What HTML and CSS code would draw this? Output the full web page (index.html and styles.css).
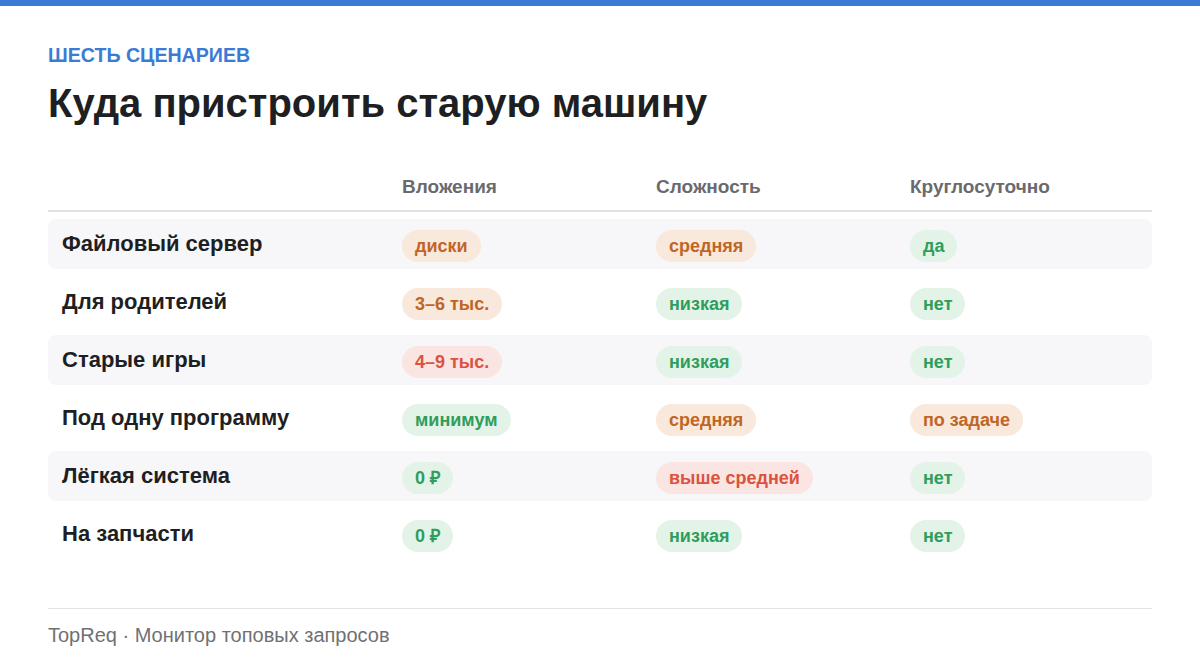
FILE: index.html
```html
<!DOCTYPE html>
<html lang="ru">
<head>
<meta charset="utf-8">
<link rel="stylesheet" href="styles.css">
</head>
<body>
<div class="topbar"></div>
<main class="page">
  <div class="eyebrow">ШЕСТЬ СЦЕНАРИЕВ</div>
  <h1 class="title">Куда пристроить старую машину</h1>
  <div class="table">
    <div class="row head">
      <div class="cell"></div>
      <div class="cell">Вложения</div>
      <div class="cell">Сложность</div>
      <div class="cell">Круглосуточно</div>
    </div>
    <div class="row striped">
      <div class="cell name">Файловый сервер</div>
      <div class="cell"><span class="pill orange">диски</span></div>
      <div class="cell"><span class="pill orange">средняя</span></div>
      <div class="cell"><span class="pill green">да</span></div>
    </div>
    <div class="row">
      <div class="cell name">Для родителей</div>
      <div class="cell"><span class="pill orange">3–6 тыс.</span></div>
      <div class="cell"><span class="pill green">низкая</span></div>
      <div class="cell"><span class="pill green">нет</span></div>
    </div>
    <div class="row striped">
      <div class="cell name">Старые игры</div>
      <div class="cell"><span class="pill red">4–9 тыс.</span></div>
      <div class="cell"><span class="pill green">низкая</span></div>
      <div class="cell"><span class="pill green">нет</span></div>
    </div>
    <div class="row">
      <div class="cell name">Под одну программу</div>
      <div class="cell"><span class="pill green">минимум</span></div>
      <div class="cell"><span class="pill orange">средняя</span></div>
      <div class="cell"><span class="pill orange">по задаче</span></div>
    </div>
    <div class="row striped">
      <div class="cell name">Лёгкая система</div>
      <div class="cell"><span class="pill green">0 ₽</span></div>
      <div class="cell"><span class="pill red">выше средней</span></div>
      <div class="cell"><span class="pill green">нет</span></div>
    </div>
    <div class="row">
      <div class="cell name">На запчасти</div>
      <div class="cell"><span class="pill green">0 ₽</span></div>
      <div class="cell"><span class="pill green">низкая</span></div>
      <div class="cell"><span class="pill green">нет</span></div>
    </div>
  </div>
  <footer class="footer">TopReq · Монитор топовых запросов</footer>
</main>
</body>
</html>
```

FILE: styles.css
```css
* { box-sizing: border-box; }
html, body { margin: 0; padding: 0; background: #ffffff; }
body {
  font-family: "Liberation Sans", Arial, sans-serif;
  color: #1e1f22;
  width: 1200px;
  height: 670px;
  overflow: hidden;
}
.topbar { height: 6px; background: #3a7bd5; }
.page { padding: 0 48px; }
.eyebrow {
  margin-top: 38px;
  font-size: 19.6px;
  font-weight: 700;
  color: #3a7bd5;
  line-height: 22px;
}
.title {
  margin: 13px 0 0;
  font-size: 40px;
  font-weight: 700;
  line-height: 48px;
  color: #1e1f22;
}
.table {
  margin-top: 49px;
  display: flex;
  flex-direction: column;
  gap: 8px;
}
.row {
  display: grid;
  grid-template-columns: 340px 254px 254px 1fr;
  height: 50px;
  align-items: center;
  border-radius: 8px;
}
.row.head {
  height: 36px;
  margin-bottom: -1px;
  align-items: start;
  border-radius: 0;
  border-bottom: 2px solid #e2e2e4;
  color: #6a6a6e;
  font-size: 19px;
  line-height: 22px;
  font-weight: 700;
}
.row.striped { background: #f7f7f9; }
.cell { padding: 0 14px; }
.name { font-size: 22px; font-weight: 700; color: #1e1f22; }
.pill {
  display: inline-block;
  height: 32px;
  line-height: 32px;
  padding: 0 13px;
  border-radius: 16px;
  font-size: 18px;
  font-weight: 700;
  margin-top: 3px;
}
.orange { background: #f9e8dc; color: #bf6526; }
.red { background: #fbe5e2; color: #d9533f; }
.green { background: #e3f3e8; color: #2f9d5c; }
.footer {
  margin-top: 49px;
  border-top: 1px solid #e4e4e6;
  padding-top: 15px;
  font-size: 20px;
  line-height: 23px;
  color: #707074;
}
```
